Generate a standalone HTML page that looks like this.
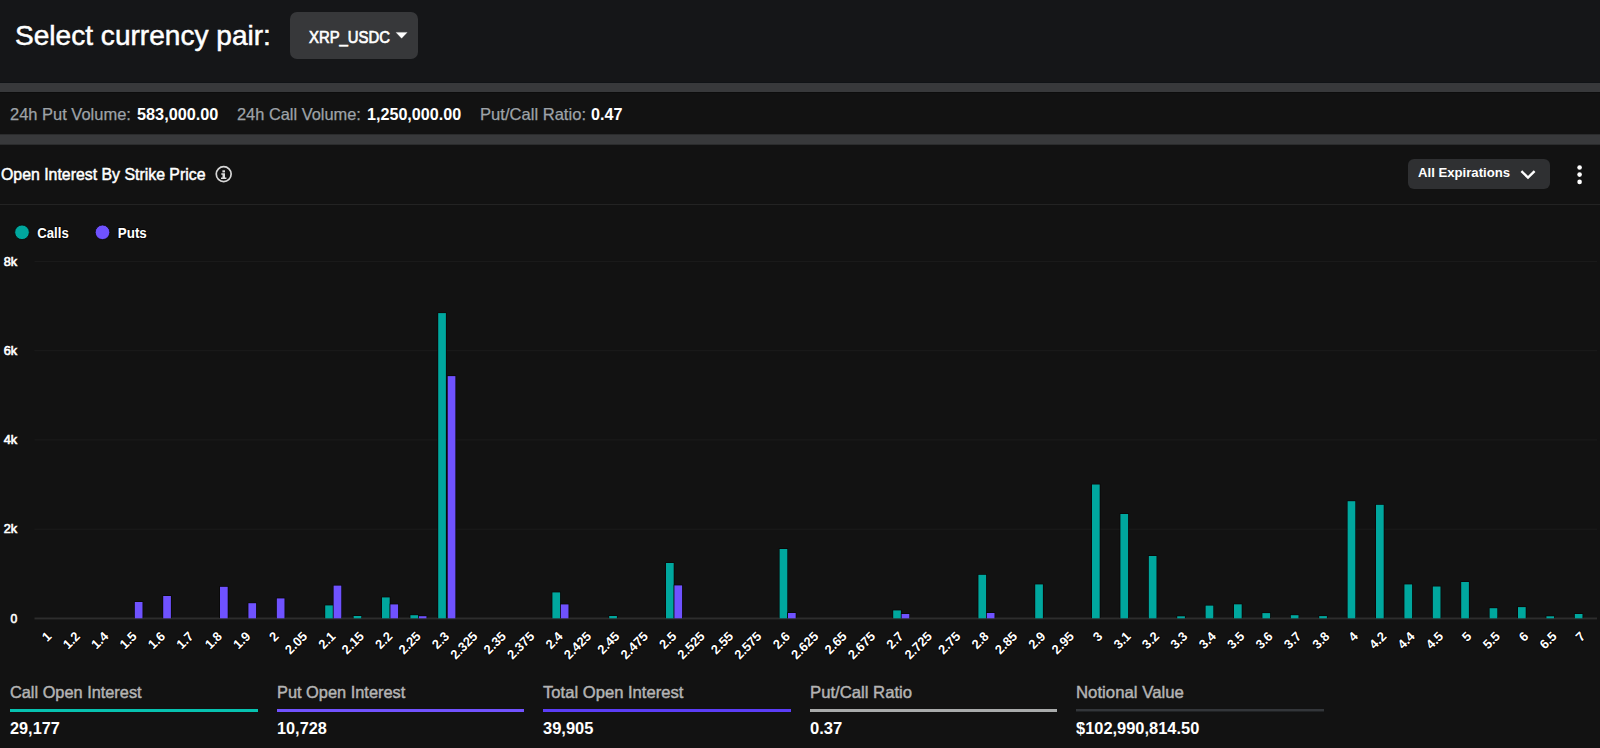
<!DOCTYPE html>
<html lang="en"><head><meta charset="utf-8"><title>Open Interest By Strike Price</title>
<style>
*{box-sizing:border-box;margin:0;padding:0}
html,body{width:1600px;height:748px;overflow:hidden;background:#121212;}
body{position:relative;font-family:"Liberation Sans",sans-serif;color:#fff}
.abs{position:absolute;white-space:nowrap}
.t{position:absolute;white-space:nowrap;line-height:20px}
.hdr{left:0;top:0;width:1600px;height:83px;background:#151618}
.bar{left:0;width:1600px;background:#38393b}
.btn{left:289.8px;top:11.6px;width:128.5px;height:47.8px;border-radius:7px;background:#37383a}
.btn i{position:absolute;left:106.4px;top:21.0px;width:0;height:0;border-left:5.8px solid transparent;border-right:5.8px solid transparent;border-top:5.9px solid #fff}
.div{left:0;top:204px;width:1600px;height:1px;background:#232323}
.exp{left:1408px;top:159px;width:142px;height:30px;border-radius:6px;background:#2f3032}
.chart{position:absolute;left:0;top:205px}
.chart text{font-family:"Liberation Sans",sans-serif;fill:#fff}
.yl{font-size:13.3px;font-weight:400;stroke:#fff;stroke-width:0.65px}
.xl{font-size:13px;font-weight:700;paint-order:stroke;stroke:#070606;stroke-width:2px;stroke-linejoin:round}
.lg{font-size:14px;font-weight:700;paint-order:stroke;stroke:#070606;stroke-width:2px;stroke-linejoin:round}
</style></head><body>
<div class="abs hdr"></div>
<div class="t" style="left:14.50px;top:25.63px;font-size:27.9px;font-weight:400;color:#fff;transform:scaleX(1.0067);transform-origin:0 0;-webkit-text-stroke:0.5px #fff;">Select currency pair:</div>
<div class="abs btn"></div><svg class="abs" style="left:390px;top:28px" width="24" height="16" viewBox="390 28 24 16"><path d="M396.1 32.4h11.0l-5.5 5.9z" fill="#fff" stroke="#fff" stroke-width="0.3" stroke-linejoin="round"/></svg>
<div class="t" style="left:308.80px;top:26.71px;font-size:17.3px;font-weight:400;color:#fff;transform:scaleX(0.8608);transform-origin:0 0;-webkit-text-stroke:0.7px #fff;">XRP_USDC</div>
<div class="abs" style="left:0;top:82px;width:1600px;height:1px;background:#101316"></div><div class="abs bar" style="top:83px;height:9px"></div><div class="abs" style="left:0;top:92px;width:1600px;height:1px;background:#0d0d0d"></div>
<div class="abs" style="left:0;top:134px;width:1600px;height:1px;background:#2b2c2d"></div><div class="abs bar" style="top:135px;height:9px"></div><div class="abs" style="left:0;top:144px;width:1600px;height:1px;background:#2b2c2d"></div>
<div class="t" style="left:10.20px;top:103.88px;font-size:16.5px;font-weight:400;color:#9ea3a8;transform:scaleX(0.9985);transform-origin:0 0;-webkit-text-stroke:0.25px #9ea3a8;">24h Put Volume:</div>
<div class="t" style="left:136.80px;top:103.88px;font-size:16.5px;font-weight:700;color:#fff;transform:scaleX(0.9857);transform-origin:0 0;">583,000.00</div>
<div class="t" style="left:237.30px;top:103.88px;font-size:16.5px;font-weight:400;color:#9ea3a8;transform:scaleX(0.9933);transform-origin:0 0;-webkit-text-stroke:0.25px #9ea3a8;">24h Call Volume:</div>
<div class="t" style="left:366.90px;top:103.88px;font-size:16.5px;font-weight:700;color:#fff;transform:scaleX(0.9778);transform-origin:0 0;">1,250,000.00</div>
<div class="t" style="left:480.20px;top:103.88px;font-size:16.5px;font-weight:400;color:#9ea3a8;transform:scaleX(1.0050);transform-origin:0 0;-webkit-text-stroke:0.25px #9ea3a8;">Put/Call Ratio:</div>
<div class="t" style="left:591.30px;top:103.88px;font-size:16.5px;font-weight:700;color:#fff;transform:scaleX(0.9779);transform-origin:0 0;">0.47</div>
<div class="t" style="left:0.80px;top:163.88px;font-size:16.5px;font-weight:400;color:#fff;transform:scaleX(0.9612);transform-origin:0 0;-webkit-text-stroke:0.5px #fff;">Open Interest By Strike Price</div>
<svg class="abs" style="left:213px;top:164px" width="21" height="21" viewBox="0 0 21 21"><circle cx="10.7" cy="10.1" r="7.45" fill="none" stroke="#d6d6d6" stroke-width="1.7"/><rect x="9.4" y="6.3" width="2.6" height="2.1" fill="#dcdcdc"/><path d="M8.3 9.2h3.7v4.3h1.4v1.6H8v-1.6h1.5v-2.7H8.3z" fill="#dcdcdc"/></svg>
<div class="abs exp"><svg style="position:absolute;left:111px;top:10px" width="18" height="12" viewBox="0 0 18 12"><path d="M2.4 2.2 9 8.6 15.6 2.2" fill="none" stroke="#fff" stroke-width="2.4"/></svg></div>
<div class="t" style="left:1418.30px;top:163.12px;font-size:13.5px;font-weight:700;color:#fff;transform:scaleX(0.9745);transform-origin:0 0;">All Expirations</div>
<svg class="abs" style="left:1574px;top:162px" width="12" height="26" viewBox="0 0 12 26"><circle cx="5.6" cy="5.5" r="2.3" fill="#fff"/><circle cx="5.6" cy="12.6" r="2.3" fill="#fff"/><circle cx="5.6" cy="19.9" r="2.3" fill="#fff"/></svg>
<div class="abs div"></div>
<svg class="chart" width="1600" height="543" viewBox="0 205 1600 543">
<rect x="34.5" y="528.65" width="1562.5" height="1" fill="#1c1c1c"/>
<rect x="34.5" y="439.40" width="1562.5" height="1" fill="#1c1c1c"/>
<rect x="34.5" y="350.15" width="1562.5" height="1" fill="#1c1c1c"/>
<rect x="34.5" y="260.90" width="1562.5" height="1" fill="#1c1c1c"/>
<rect x="34.5" y="617.50" width="1562.5" height="1.9" fill="#2d2d2d"/>
<rect x="134.10" y="601.30" width="9.1" height="16.70" fill="#070606"/><rect x="134.80" y="602.00" width="7.7" height="16.30" fill="#6f52ff"/>
<rect x="162.50" y="595.30" width="9.1" height="22.70" fill="#070606"/><rect x="163.20" y="596.00" width="7.7" height="22.30" fill="#6f52ff"/>
<rect x="219.30" y="586.10" width="9.1" height="31.90" fill="#070606"/><rect x="220.00" y="586.80" width="7.7" height="31.50" fill="#6f52ff"/>
<rect x="247.70" y="602.50" width="9.1" height="15.50" fill="#070606"/><rect x="248.40" y="603.20" width="7.7" height="15.10" fill="#6f52ff"/>
<rect x="276.10" y="597.70" width="9.1" height="20.30" fill="#070606"/><rect x="276.80" y="598.40" width="7.7" height="19.90" fill="#6f52ff"/>
<rect x="324.50" y="604.70" width="9.1" height="13.30" fill="#070606"/><rect x="325.20" y="605.40" width="7.7" height="12.90" fill="#00a79e"/>
<rect x="332.90" y="584.90" width="9.1" height="33.10" fill="#070606"/><rect x="333.60" y="585.60" width="7.7" height="32.70" fill="#6f52ff"/>
<rect x="352.90" y="615.30" width="9.1" height="2.70" fill="#070606"/><rect x="353.60" y="616.00" width="7.7" height="2.30" fill="#00a79e"/>
<rect x="381.30" y="596.70" width="9.1" height="21.30" fill="#070606"/><rect x="382.00" y="597.40" width="7.7" height="20.90" fill="#00a79e"/>
<rect x="389.70" y="603.70" width="9.1" height="14.30" fill="#070606"/><rect x="390.40" y="604.40" width="7.7" height="13.90" fill="#6f52ff"/>
<rect x="409.70" y="614.50" width="9.1" height="3.50" fill="#070606"/><rect x="410.40" y="615.20" width="7.7" height="3.10" fill="#00a79e"/>
<rect x="418.10" y="615.50" width="9.1" height="2.50" fill="#070606"/><rect x="418.80" y="616.20" width="7.7" height="2.10" fill="#6f52ff"/>
<rect x="437.50" y="312.40" width="9.1" height="305.60" fill="#070606"/><rect x="438.20" y="313.10" width="7.7" height="305.20" fill="#00a79e"/>
<rect x="447.00" y="375.40" width="9.1" height="242.60" fill="#070606"/><rect x="447.70" y="376.10" width="7.7" height="242.20" fill="#6f52ff"/>
<rect x="551.70" y="591.70" width="9.1" height="26.30" fill="#070606"/><rect x="552.40" y="592.40" width="7.7" height="25.90" fill="#00a79e"/>
<rect x="560.10" y="603.70" width="9.1" height="14.30" fill="#070606"/><rect x="560.80" y="604.40" width="7.7" height="13.90" fill="#6f52ff"/>
<rect x="608.50" y="615.30" width="9.1" height="2.70" fill="#070606"/><rect x="609.20" y="616.00" width="7.7" height="2.30" fill="#00a79e"/>
<rect x="665.30" y="562.30" width="9.1" height="55.70" fill="#070606"/><rect x="666.00" y="563.00" width="7.7" height="55.30" fill="#00a79e"/>
<rect x="673.70" y="584.70" width="9.1" height="33.30" fill="#070606"/><rect x="674.40" y="585.40" width="7.7" height="32.90" fill="#6f52ff"/>
<rect x="778.90" y="548.30" width="9.1" height="69.70" fill="#070606"/><rect x="779.60" y="549.00" width="7.7" height="69.30" fill="#00a79e"/>
<rect x="787.30" y="612.30" width="9.1" height="5.70" fill="#070606"/><rect x="788.00" y="613.00" width="7.7" height="5.30" fill="#6f52ff"/>
<rect x="892.50" y="609.70" width="9.1" height="8.30" fill="#070606"/><rect x="893.20" y="610.40" width="7.7" height="7.90" fill="#00a79e"/>
<rect x="900.90" y="613.30" width="9.1" height="4.70" fill="#070606"/><rect x="901.60" y="614.00" width="7.7" height="4.30" fill="#6f52ff"/>
<rect x="977.70" y="574.10" width="9.1" height="43.90" fill="#070606"/><rect x="978.40" y="574.80" width="7.7" height="43.50" fill="#00a79e"/>
<rect x="986.10" y="612.30" width="9.1" height="5.70" fill="#070606"/><rect x="986.80" y="613.00" width="7.7" height="5.30" fill="#6f52ff"/>
<rect x="1034.50" y="583.70" width="9.1" height="34.30" fill="#070606"/><rect x="1035.20" y="584.40" width="7.7" height="33.90" fill="#00a79e"/>
<rect x="1091.30" y="483.80" width="9.1" height="134.20" fill="#070606"/><rect x="1092.00" y="484.50" width="7.7" height="133.80" fill="#00a79e"/>
<rect x="1119.70" y="513.30" width="9.1" height="104.70" fill="#070606"/><rect x="1120.40" y="514.00" width="7.7" height="104.30" fill="#00a79e"/>
<rect x="1148.10" y="555.30" width="9.1" height="62.70" fill="#070606"/><rect x="1148.80" y="556.00" width="7.7" height="62.30" fill="#00a79e"/>
<rect x="1176.50" y="615.60" width="9.1" height="2.40" fill="#070606"/><rect x="1177.20" y="616.30" width="7.7" height="2.00" fill="#00a79e"/>
<rect x="1204.90" y="604.90" width="9.1" height="13.10" fill="#070606"/><rect x="1205.60" y="605.60" width="7.7" height="12.70" fill="#00a79e"/>
<rect x="1233.30" y="603.60" width="9.1" height="14.40" fill="#070606"/><rect x="1234.00" y="604.30" width="7.7" height="14.00" fill="#00a79e"/>
<rect x="1261.70" y="612.40" width="9.1" height="5.60" fill="#070606"/><rect x="1262.40" y="613.10" width="7.7" height="5.20" fill="#00a79e"/>
<rect x="1290.10" y="614.50" width="9.1" height="3.50" fill="#070606"/><rect x="1290.80" y="615.20" width="7.7" height="3.10" fill="#00a79e"/>
<rect x="1318.50" y="615.40" width="9.1" height="2.60" fill="#070606"/><rect x="1319.20" y="616.10" width="7.7" height="2.20" fill="#00a79e"/>
<rect x="1346.90" y="500.50" width="9.1" height="117.50" fill="#070606"/><rect x="1347.60" y="501.20" width="7.7" height="117.10" fill="#00a79e"/>
<rect x="1375.30" y="504.10" width="9.1" height="113.90" fill="#070606"/><rect x="1376.00" y="504.80" width="7.7" height="113.50" fill="#00a79e"/>
<rect x="1403.70" y="583.70" width="9.1" height="34.30" fill="#070606"/><rect x="1404.40" y="584.40" width="7.7" height="33.90" fill="#00a79e"/>
<rect x="1432.10" y="585.80" width="9.1" height="32.20" fill="#070606"/><rect x="1432.80" y="586.50" width="7.7" height="31.80" fill="#00a79e"/>
<rect x="1460.50" y="581.30" width="9.1" height="36.70" fill="#070606"/><rect x="1461.20" y="582.00" width="7.7" height="36.30" fill="#00a79e"/>
<rect x="1488.90" y="607.50" width="9.1" height="10.50" fill="#070606"/><rect x="1489.60" y="608.20" width="7.7" height="10.10" fill="#00a79e"/>
<rect x="1517.30" y="606.40" width="9.1" height="11.60" fill="#070606"/><rect x="1518.00" y="607.10" width="7.7" height="11.20" fill="#00a79e"/>
<rect x="1545.70" y="615.60" width="9.1" height="2.40" fill="#070606"/><rect x="1546.40" y="616.30" width="7.7" height="2.00" fill="#00a79e"/>
<rect x="1574.10" y="613.30" width="9.1" height="4.70" fill="#070606"/><rect x="1574.80" y="614.00" width="7.7" height="4.30" fill="#00a79e"/>
<text class="yl" text-anchor="end" x="17.2" y="622.70" textLength="6.8" lengthAdjust="spacingAndGlyphs">0</text>
<text class="yl" text-anchor="end" x="17.2" y="533.45" textLength="13.4" lengthAdjust="spacingAndGlyphs">2k</text>
<text class="yl" text-anchor="end" x="17.2" y="444.20" textLength="13.4" lengthAdjust="spacingAndGlyphs">4k</text>
<text class="yl" text-anchor="end" x="17.2" y="354.95" textLength="13.4" lengthAdjust="spacingAndGlyphs">6k</text>
<text class="yl" text-anchor="end" x="17.2" y="265.70" textLength="13.4" lengthAdjust="spacingAndGlyphs">8k</text>
<text class="xl" text-anchor="end" textLength="7.16" lengthAdjust="spacingAndGlyphs" transform="translate(52.40,637.20) rotate(-45)">1</text>
<text class="xl" text-anchor="end" textLength="17.89" lengthAdjust="spacingAndGlyphs" transform="translate(80.80,637.20) rotate(-45)">1.2</text>
<text class="xl" text-anchor="end" textLength="17.89" lengthAdjust="spacingAndGlyphs" transform="translate(109.20,637.20) rotate(-45)">1.4</text>
<text class="xl" text-anchor="end" textLength="17.89" lengthAdjust="spacingAndGlyphs" transform="translate(137.60,637.20) rotate(-45)">1.5</text>
<text class="xl" text-anchor="end" textLength="17.89" lengthAdjust="spacingAndGlyphs" transform="translate(166.00,637.20) rotate(-45)">1.6</text>
<text class="xl" text-anchor="end" textLength="17.89" lengthAdjust="spacingAndGlyphs" transform="translate(194.40,637.20) rotate(-45)">1.7</text>
<text class="xl" text-anchor="end" textLength="17.89" lengthAdjust="spacingAndGlyphs" transform="translate(222.80,637.20) rotate(-45)">1.8</text>
<text class="xl" text-anchor="end" textLength="17.89" lengthAdjust="spacingAndGlyphs" transform="translate(251.20,637.20) rotate(-45)">1.9</text>
<text class="xl" text-anchor="end" textLength="7.16" lengthAdjust="spacingAndGlyphs" transform="translate(279.60,637.20) rotate(-45)">2</text>
<text class="xl" text-anchor="end" textLength="25.05" lengthAdjust="spacingAndGlyphs" transform="translate(308.00,637.20) rotate(-45)">2.05</text>
<text class="xl" text-anchor="end" textLength="17.89" lengthAdjust="spacingAndGlyphs" transform="translate(336.40,637.20) rotate(-45)">2.1</text>
<text class="xl" text-anchor="end" textLength="25.05" lengthAdjust="spacingAndGlyphs" transform="translate(364.80,637.20) rotate(-45)">2.15</text>
<text class="xl" text-anchor="end" textLength="17.89" lengthAdjust="spacingAndGlyphs" transform="translate(393.20,637.20) rotate(-45)">2.2</text>
<text class="xl" text-anchor="end" textLength="25.05" lengthAdjust="spacingAndGlyphs" transform="translate(421.60,637.20) rotate(-45)">2.25</text>
<text class="xl" text-anchor="end" textLength="17.89" lengthAdjust="spacingAndGlyphs" transform="translate(450.00,637.20) rotate(-45)">2.3</text>
<text class="xl" text-anchor="end" textLength="32.21" lengthAdjust="spacingAndGlyphs" transform="translate(478.40,637.20) rotate(-45)">2.325</text>
<text class="xl" text-anchor="end" textLength="25.05" lengthAdjust="spacingAndGlyphs" transform="translate(506.80,637.20) rotate(-45)">2.35</text>
<text class="xl" text-anchor="end" textLength="32.21" lengthAdjust="spacingAndGlyphs" transform="translate(535.20,637.20) rotate(-45)">2.375</text>
<text class="xl" text-anchor="end" textLength="17.89" lengthAdjust="spacingAndGlyphs" transform="translate(563.60,637.20) rotate(-45)">2.4</text>
<text class="xl" text-anchor="end" textLength="32.21" lengthAdjust="spacingAndGlyphs" transform="translate(592.00,637.20) rotate(-45)">2.425</text>
<text class="xl" text-anchor="end" textLength="25.05" lengthAdjust="spacingAndGlyphs" transform="translate(620.40,637.20) rotate(-45)">2.45</text>
<text class="xl" text-anchor="end" textLength="32.21" lengthAdjust="spacingAndGlyphs" transform="translate(648.80,637.20) rotate(-45)">2.475</text>
<text class="xl" text-anchor="end" textLength="17.89" lengthAdjust="spacingAndGlyphs" transform="translate(677.20,637.20) rotate(-45)">2.5</text>
<text class="xl" text-anchor="end" textLength="32.21" lengthAdjust="spacingAndGlyphs" transform="translate(705.60,637.20) rotate(-45)">2.525</text>
<text class="xl" text-anchor="end" textLength="25.05" lengthAdjust="spacingAndGlyphs" transform="translate(734.00,637.20) rotate(-45)">2.55</text>
<text class="xl" text-anchor="end" textLength="32.21" lengthAdjust="spacingAndGlyphs" transform="translate(762.40,637.20) rotate(-45)">2.575</text>
<text class="xl" text-anchor="end" textLength="17.89" lengthAdjust="spacingAndGlyphs" transform="translate(790.80,637.20) rotate(-45)">2.6</text>
<text class="xl" text-anchor="end" textLength="32.21" lengthAdjust="spacingAndGlyphs" transform="translate(819.20,637.20) rotate(-45)">2.625</text>
<text class="xl" text-anchor="end" textLength="25.05" lengthAdjust="spacingAndGlyphs" transform="translate(847.60,637.20) rotate(-45)">2.65</text>
<text class="xl" text-anchor="end" textLength="32.21" lengthAdjust="spacingAndGlyphs" transform="translate(876.00,637.20) rotate(-45)">2.675</text>
<text class="xl" text-anchor="end" textLength="17.89" lengthAdjust="spacingAndGlyphs" transform="translate(904.40,637.20) rotate(-45)">2.7</text>
<text class="xl" text-anchor="end" textLength="32.21" lengthAdjust="spacingAndGlyphs" transform="translate(932.80,637.20) rotate(-45)">2.725</text>
<text class="xl" text-anchor="end" textLength="25.05" lengthAdjust="spacingAndGlyphs" transform="translate(961.20,637.20) rotate(-45)">2.75</text>
<text class="xl" text-anchor="end" textLength="17.89" lengthAdjust="spacingAndGlyphs" transform="translate(989.60,637.20) rotate(-45)">2.8</text>
<text class="xl" text-anchor="end" textLength="25.05" lengthAdjust="spacingAndGlyphs" transform="translate(1018.00,637.20) rotate(-45)">2.85</text>
<text class="xl" text-anchor="end" textLength="17.89" lengthAdjust="spacingAndGlyphs" transform="translate(1046.40,637.20) rotate(-45)">2.9</text>
<text class="xl" text-anchor="end" textLength="25.05" lengthAdjust="spacingAndGlyphs" transform="translate(1074.80,637.20) rotate(-45)">2.95</text>
<text class="xl" text-anchor="end" textLength="7.16" lengthAdjust="spacingAndGlyphs" transform="translate(1103.20,637.20) rotate(-45)">3</text>
<text class="xl" text-anchor="end" textLength="17.89" lengthAdjust="spacingAndGlyphs" transform="translate(1131.60,637.20) rotate(-45)">3.1</text>
<text class="xl" text-anchor="end" textLength="17.89" lengthAdjust="spacingAndGlyphs" transform="translate(1160.00,637.20) rotate(-45)">3.2</text>
<text class="xl" text-anchor="end" textLength="17.89" lengthAdjust="spacingAndGlyphs" transform="translate(1188.40,637.20) rotate(-45)">3.3</text>
<text class="xl" text-anchor="end" textLength="17.89" lengthAdjust="spacingAndGlyphs" transform="translate(1216.80,637.20) rotate(-45)">3.4</text>
<text class="xl" text-anchor="end" textLength="17.89" lengthAdjust="spacingAndGlyphs" transform="translate(1245.20,637.20) rotate(-45)">3.5</text>
<text class="xl" text-anchor="end" textLength="17.89" lengthAdjust="spacingAndGlyphs" transform="translate(1273.60,637.20) rotate(-45)">3.6</text>
<text class="xl" text-anchor="end" textLength="17.89" lengthAdjust="spacingAndGlyphs" transform="translate(1302.00,637.20) rotate(-45)">3.7</text>
<text class="xl" text-anchor="end" textLength="17.89" lengthAdjust="spacingAndGlyphs" transform="translate(1330.40,637.20) rotate(-45)">3.8</text>
<text class="xl" text-anchor="end" textLength="7.16" lengthAdjust="spacingAndGlyphs" transform="translate(1358.80,637.20) rotate(-45)">4</text>
<text class="xl" text-anchor="end" textLength="17.89" lengthAdjust="spacingAndGlyphs" transform="translate(1387.20,637.20) rotate(-45)">4.2</text>
<text class="xl" text-anchor="end" textLength="17.89" lengthAdjust="spacingAndGlyphs" transform="translate(1415.60,637.20) rotate(-45)">4.4</text>
<text class="xl" text-anchor="end" textLength="17.89" lengthAdjust="spacingAndGlyphs" transform="translate(1444.00,637.20) rotate(-45)">4.5</text>
<text class="xl" text-anchor="end" textLength="7.16" lengthAdjust="spacingAndGlyphs" transform="translate(1472.40,637.20) rotate(-45)">5</text>
<text class="xl" text-anchor="end" textLength="17.89" lengthAdjust="spacingAndGlyphs" transform="translate(1500.80,637.20) rotate(-45)">5.5</text>
<text class="xl" text-anchor="end" textLength="7.16" lengthAdjust="spacingAndGlyphs" transform="translate(1529.20,637.20) rotate(-45)">6</text>
<text class="xl" text-anchor="end" textLength="17.89" lengthAdjust="spacingAndGlyphs" transform="translate(1557.60,637.20) rotate(-45)">6.5</text>
<text class="xl" text-anchor="end" textLength="7.16" lengthAdjust="spacingAndGlyphs" transform="translate(1586.00,637.20) rotate(-45)">7</text>
<circle cx="22" cy="232.3" r="7.3" fill="#00a79e" stroke="#070606" stroke-width="0.8"/>
<text class="lg" x="37.3" y="237.9" textLength="31.4" lengthAdjust="spacingAndGlyphs">Calls</text>
<circle cx="102.5" cy="232.3" r="7.3" fill="#6f52ff" stroke="#070606" stroke-width="0.8"/>
<text class="lg" x="117.8" y="237.9" textLength="29" lengthAdjust="spacingAndGlyphs">Puts</text>
</svg>
<div class="t" style="left:10.00px;top:682.08px;font-size:16.5px;font-weight:400;color:#b4b4b4;transform:scaleX(0.9895);transform-origin:0 0;-webkit-text-stroke:0.45px #b4b4b4;">Call Open Interest</div>
<div class="abs" style="left:10px;top:709px;width:248px;height:3px;background:#06c2b0"></div>
<div class="t" style="left:10.00px;top:718.28px;font-size:16.5px;font-weight:700;color:#fff;transform:scaleX(0.9867);transform-origin:0 0;">29,177</div>
<div class="t" style="left:276.50px;top:682.08px;font-size:16.5px;font-weight:400;color:#b4b4b4;transform:scaleX(0.9921);transform-origin:0 0;-webkit-text-stroke:0.45px #b4b4b4;">Put Open Interest</div>
<div class="abs" style="left:277px;top:709px;width:247px;height:3px;background:#7152ff"></div>
<div class="t" style="left:277.00px;top:718.28px;font-size:16.5px;font-weight:700;color:#fff;transform:scaleX(0.9867);transform-origin:0 0;">10,728</div>
<div class="t" style="left:543.20px;top:682.08px;font-size:16.5px;font-weight:400;color:#b4b4b4;transform:scaleX(1.0071);transform-origin:0 0;-webkit-text-stroke:0.45px #b4b4b4;">Total Open Interest</div>
<div class="abs" style="left:543px;top:709px;width:248px;height:3px;background:#5b3df7"></div>
<div class="t" style="left:543.20px;top:718.28px;font-size:16.5px;font-weight:700;color:#fff;transform:scaleX(0.9985);transform-origin:0 0;">39,905</div>
<div class="t" style="left:809.50px;top:682.08px;font-size:16.5px;font-weight:400;color:#b4b4b4;transform:scaleX(1.0121);transform-origin:0 0;-webkit-text-stroke:0.45px #b4b4b4;">Put/Call Ratio</div>
<div class="abs" style="left:810px;top:709px;width:247px;height:3px;background:#a9abab"></div>
<div class="t" style="left:809.50px;top:718.28px;font-size:16.5px;font-weight:700;color:#fff;transform:scaleX(1.0059);transform-origin:0 0;">0.37</div>
<div class="t" style="left:1076.20px;top:682.08px;font-size:16.5px;font-weight:400;color:#b4b4b4;transform:scaleX(1.0170);transform-origin:0 0;-webkit-text-stroke:0.45px #b4b4b4;">Notional Value</div>
<div class="abs" style="left:1076px;top:709px;width:248px;height:2px;background:#33363a"></div>
<div class="abs" style="left:1076px;top:711px;width:248px;height:1px;background:#202224"></div>
<div class="t" style="left:1075.80px;top:718.28px;font-size:16.5px;font-weight:700;color:#fff;transform:scaleX(0.9954);transform-origin:0 0;">$102,990,814.50</div>
</body></html>
